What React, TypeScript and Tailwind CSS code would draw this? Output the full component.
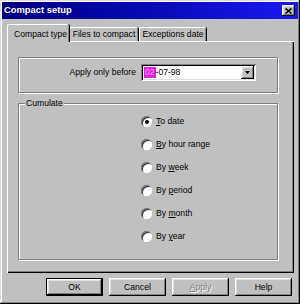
import React from "react";

const RAISED =
  "shadow-[inset_-1px_-1px_0_#000,inset_1px_1px_0_#fff,inset_-2px_-2px_0_#808080,inset_2px_2px_0_#dfdfdf]";
const SUNKEN =
  "shadow-[inset_1px_1px_0_#808080,inset_-1px_-1px_0_#fff,inset_2px_2px_0_#000,inset_-2px_-2px_0_#dfdfdf]";

const RADIOS: { pre: string; key: string; post: string; checked?: boolean }[] = [
  { pre: "", key: "T", post: "o date", checked: true },
  { pre: "", key: "B", post: "y hour range" },
  { pre: "By ", key: "w", post: "eek" },
  { pre: "By ", key: "p", post: "eriod" },
  { pre: "By ", key: "m", post: "onth" },
  { pre: "By ", key: "y", post: "ear" },
];

function Radio({ checked }: { checked?: boolean }) {
  return (
    <span className="relative flex h-[11px] w-[11px] items-center justify-center rounded-full bg-white shadow-[inset_1px_1px_0_#808080,inset_-1px_-1px_0_#fff,inset_2px_2px_0_#404040]">
      {checked && <span className="h-[4px] w-[4px] rounded-full bg-black" />}
    </span>
  );
}

function Btn({ label, def, disabled }: { label: React.ReactNode; def?: boolean; disabled?: boolean }) {
  return (
    <div className={`h-[18px] w-[57px] ${def ? "border border-black" : ""}`}>
      <div
        className={`flex h-full w-full items-center justify-center bg-[#c0c0c0] ${RAISED} ${
          disabled ? "text-[#808080] [text-shadow:1px_1px_0_#fff]" : "text-black"
        }`}
      >
        {label}
      </div>
    </div>
  );
}

export default function App() {
  return (
    <div className="h-[304px] w-[300px] bg-[#c0c0c0] p-[2px] font-['Liberation_Sans',Arial,sans-serif] text-[8.6px] text-black shadow-[inset_-1px_-1px_0_#000,inset_1px_1px_0_#dfdfdf,inset_-2px_-2px_0_#808080,inset_2px_2px_0_#fff]">
      {/* title bar */}
      <div className="flex h-[17px] items-center justify-between bg-gradient-to-r from-[#000080] to-[#1818f0] pl-[2px] pr-[3px]">
        <span className="text-[9.4px] font-bold text-white">Compact setup</span>
        <div className={`flex h-[11px] w-[13px] items-center justify-center bg-[#c0c0c0] ${RAISED}`}>
          <svg width="7" height="6" viewBox="0 0 7 6">
            <path d="M0.5 0.5 L6.5 5.5 M6.5 0.5 L0.5 5.5" stroke="#000" strokeWidth="1.6" />
          </svg>
        </div>
      </div>

      <div className="pl-[5px] pt-[5px]">
        {/* tabs */}
        <div className="flex h-[17px] items-end">
          <div className="relative z-10 mb-[-1px] flex h-[18px] w-[62px] items-start rounded-t-[2px] border-l border-t border-white bg-[#c0c0c0] pl-[6px] pt-[3px] shadow-[inset_-1px_0_0_#808080,1px_0_0_#000]">
            Compact type
          </div>
          <div className="flex h-[14px] w-[69px] items-center justify-center rounded-t-[2px] border-l border-t border-white shadow-[inset_-1px_0_0_#808080,1px_0_0_#000]">
            Files to compact
          </div>
          <div className="ml-px flex h-[14px] w-[67px] items-center justify-center rounded-t-[2px] border-l border-t border-white shadow-[inset_-1px_0_0_#808080,1px_0_0_#000]">
            Exceptions date
          </div>
        </div>

        {/* panel */}
        <div className="h-[232px] w-[287px] border-l border-t border-white pl-[10px] pt-[15px] shadow-[inset_-1px_-1px_0_#000,inset_-2px_-2px_0_#808080]">
          <div className="h-[36px] w-[260px] border border-[#808080] shadow-[1px_1px_0_#fff,inset_1px_1px_0_#fff]">
            <div className="flex items-start justify-end gap-[5px] pr-[21px] pt-[6px]">
              <span className="mt-[3px] leading-[11px]">Apply only before</span>
              <div className={`flex h-[17px] w-[115px] items-center bg-white p-[2px] ${SUNKEN}`}>
                <div className="flex flex-1 items-center pl-[1px] leading-[11px]">
                  <span className="bg-[#e020e0] px-px text-[#ff9cff]">02</span>
                  <span>-07-98</span>
                </div>
                <div className={`flex h-[13px] w-[13px] items-center justify-center bg-[#c0c0c0] ${RAISED}`}>
                  <svg width="5" height="3" viewBox="0 0 5 3">
                    <path d="M0 0 H5 L2.5 3 Z" fill="#000" />
                  </svg>
                </div>
              </div>
            </div>
          </div>

          <div className="relative mt-[10px] h-[157px] w-[260px] border border-[#808080] pl-[122px] pt-[6px] shadow-[1px_1px_0_#fff,inset_1px_1px_0_#fff]">
            <span className="absolute left-[6px] top-[-7px] bg-[#c0c0c0] px-px leading-[12px]">Cumulate</span>
            {RADIOS.map((r) => (
              <div key={r.key + r.post} className="flex h-[23px] items-center gap-[4px]">
                <Radio checked={r.checked} />
                <span>
                  {r.pre}
                  <span className="underline underline-offset-[1px]">{r.key}</span>
                  {r.post}
                </span>
              </div>
            ))}
          </div>
        </div>

        {/* buttons */}
        <div className="mt-[5px] flex w-[285px] justify-end gap-[6px]">
          <Btn label="OK" def />
          <Btn label="Cancel" />
          <Btn
            label={
              <span>
                <span className="underline">A</span>pply
              </span>
            }
            disabled
          />
          <Btn label="Help" />
        </div>
      </div>
    </div>
  );
}
